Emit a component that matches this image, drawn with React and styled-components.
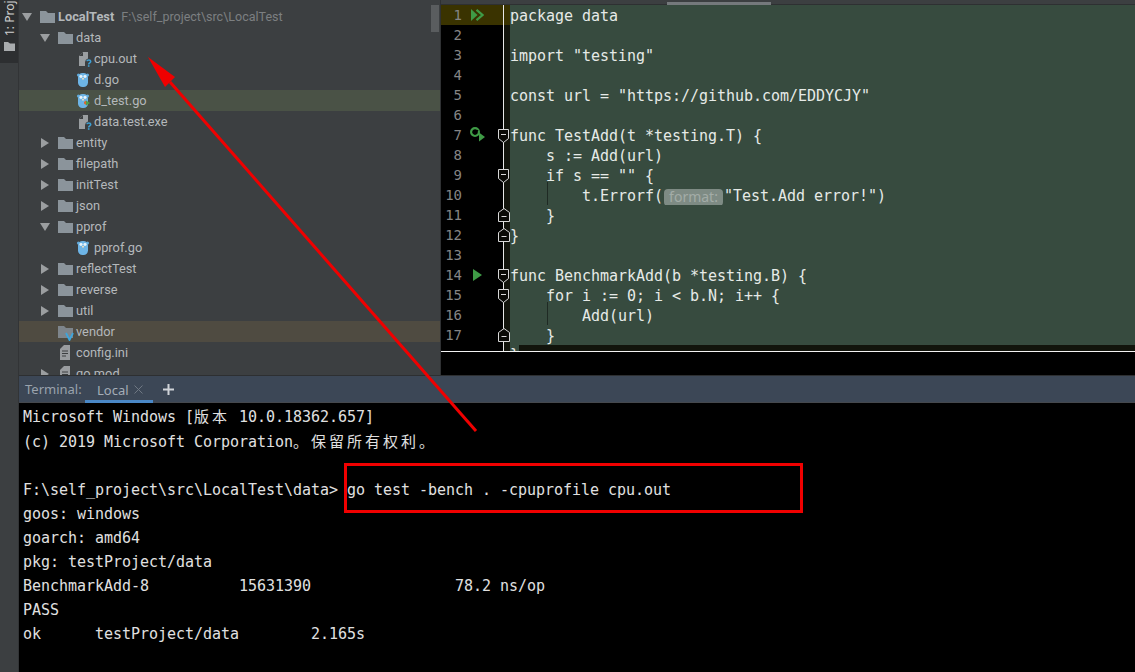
import React from "react";
import styled, { createGlobalStyle } from "styled-components";

const Global = createGlobalStyle`
  html, body { margin: 0; padding: 0; background: #000; }
  #root { width: 1135px; height: 672px; overflow: hidden; }
`;

const Page = styled.div`
  position: relative;
  width: 1135px;
  height: 672px;
  display: flex;
  overflow: hidden;
  background: #000;
`;
const Rail = styled.aside`
  width: 19px;
  flex: none;
  background: #3c3f41;
  border-right: 1px solid #323436;
  box-sizing: border-box;
`;
const RailTab = styled.div`
  height: 63px;
  background: #2d2f31;
  display: flex;
  flex-direction: column;
  align-items: center;
  overflow: hidden;
`;
const RailLabel = styled.div`
  writing-mode: vertical-rl;
  transform: rotate(180deg);
  height: 36px;
  flex: none;
  display: flex;
  justify-content: flex-start;
  overflow: hidden;
  font: 12px "Noto Sans", sans-serif;
  color: #d0d0d0;
  line-height: 17px;
  white-space: nowrap;
`;
const RailFolder = styled.svg`
  margin-top: 6px;
  flex: none;
`;
const Main = styled.div`
  flex: 1;
  min-width: 0;
  display: flex;
  flex-direction: column;
`;
const Top = styled.div`
  height: 375px;
  flex: none;
  display: flex;
  overflow: hidden;
`;
const Tree = styled.nav`
  width: 422px;
  flex: none;
  box-sizing: border-box;
  padding-top: 6px;
  background: #3c3f41;
  border-right: 1px solid #2f3133;
  overflow: hidden;
`;
const Row = styled.div`
  height: 21px;
  display: flex;
  align-items: center;
  padding-left: ${p => 3 + p.$depth * 18}px;
  background: ${p => p.$bg || "transparent"};
  font: 12.8px "Roboto", sans-serif;
  color: #b4b8bb;
  white-space: nowrap;
`;
const ArrowBox = styled.span`
  width: 18px;
  height: 21px;
  flex: none;
  display: flex;
  align-items: center;
`;
const IconBox = styled.span`
  width: 18px;
  height: 21px;
  flex: none;
  display: flex;
  align-items: center;
`;
const RowName = styled.span`
  font-weight: ${p => (p.$bold ? 700 : 400)};
`;
const RowPath = styled.span`
  margin-left: 7px;
  font-size: 12.5px;
  color: #7c7f81;
`;

const Editor = styled.section`
  flex: 1;
  min-width: 0;
  display: flex;
  flex-direction: column;
  background: #000;
`;
const EditorStrip = styled.div`
  height: 5px;
  flex: none;
  background: #3c3f41;
  border-bottom: 1px solid #2e3032;
  box-sizing: border-box;
  padding: 2px 0 0 226px;
`;
const StripThumb = styled.div`
  width: 104px;
  height: 3px;
  background: #75797c;
`;
const Lines = styled.div`
  height: 346px;
  flex: none;
  overflow: hidden;
  border-bottom: 1px solid #f2f2f2;
`;
const CodeRow = styled.div`
  height: 20px;
  display: flex;
`;
const Gutter = styled.div`
  width: 69px;
  flex: none;
  display: flex;
  position: relative;
  background: ${p => (p.$current ? "#3a3300" : "#000")};
`;
const LineNo = styled.span`
  width: 21px;
  text-align: right;
  flex: none;
  font: 14px/20px "DejaVu Sans Mono", monospace;
  color: #858585;
`;
const RunSlot = styled.span`
  width: 24px;
  margin-left: 8px;
  flex: none;
  display: flex;
  align-items: center;
`;
const FoldColumn = styled.span`
  position: absolute;
  left: 55px;
  top: 0;
  width: 14px;
  height: 20px;
  display: block;
`;
const FoldStrip = styled.i`
  position: absolute;
  left: 8px;
  right: 0;
  top: 0;
  bottom: 0;
  background: #12140c;
`;
const FoldLine = styled.i`
  position: absolute;
  left: 7px;
  top: 0;
  bottom: 0;
  width: 1px;
  background: #e8e8e8;
`;
const FoldIcon = styled.svg`
  position: absolute;
  left: 2px;
  top: ${p => (p.$end ? 3 : 4)}px;
`;
const CodeText = styled.pre`
  margin: 0;
  flex: 1;
  position: relative;
  box-sizing: border-box;
  padding-top: 1px;
  background: #374b3f;
  font: 15px/20px "DejaVu Sans Mono", monospace;
  letter-spacing: -0.03px;
  color: #e6eae7;
  white-space: pre;
`;
const Guide = styled.i`
  position: absolute;
  left: 37px;
  top: -3px;
  bottom: 0;
  width: 1px;
  background: #1f2a24;
`;
const Hint = styled.span`
  display: inline-block;
  width: 59px;
  height: 17px;
  margin: 0 1px;
  border-radius: 4px;
  background: #7e8b84;
  color: #a3aca7;
  font: 14px/16px "Noto Sans", sans-serif;
  letter-spacing: 0;
  text-align: center;
  vertical-align: -1px;
`;
const LastRow = styled.div`
  height: 6px;
  display: flex;
  overflow: hidden;
`;
const LastCode = styled.div`
  flex: 1;
  background: #12140c;
`;
const LastCell = styled.pre`
  margin: 0;
  width: 9px;
  height: 6px;
  background: #374b3f;
  font: 15px/20px "DejaVu Sans Mono", monospace;
  color: #e6eae7;
  overflow: hidden;
`;
const EditorFoot = styled.div`
  flex: 1;
  background: #000;
`;

const TabBar = styled.div`
  height: 28px;
  flex: none;
  display: flex;
  align-items: stretch;
  box-sizing: border-box;
  background: #3c4756;
  border-top: 1px solid #2d2f31;
  box-shadow: inset 0 -1px #45484d;
  font: 13px "Noto Sans", sans-serif;
`;
const TabLabel = styled.span`
  width: 66px;
  flex: none;
  box-sizing: border-box;
  padding-left: 6px;
  line-height: 27px;
  color: #9aa3ad;
`;
const Tab = styled.div`
  width: 68px;
  flex: none;
  box-sizing: border-box;
  padding-left: 12px;
  display: flex;
  align-items: center;
  gap: 5px;
  height: 27px;
  border-bottom: 3px solid #4a88c7;
  color: #a4adb7;
  padding-top: 3px;
`;
const PlusBox = styled.span`
  margin-left: 10px;
  display: flex;
  align-items: center;
`;
const Terminal = styled.pre`
  flex: 1;
  margin: 0;
  padding: 1px 0 0 4px;
  background: #000;
  font: 15px/24px "DejaVu Sans Mono", "Liberation Mono", monospace;
  letter-spacing: -0.03px;
  color: #e0e0e0;
  white-space: pre;
`;
const Cjk = styled.span`
  font-family: "Noto Sans CJK SC", sans-serif;
  letter-spacing: 3px;
`;

const Overlay = styled.svg`
  position: absolute;
  inset: 0;
  pointer-events: none;
`;
const CommandBox = styled.div`
  position: absolute;
  left: 344px;
  top: 463px;
  width: 459px;
  height: 50px;
  box-sizing: border-box;
  border: 3px solid #f00000;
`;
const TreeThumb = styled.div`
  position: absolute;
  left: 431px;
  top: 5px;
  width: 8px;
  height: 27px;
  background: #5a5d5f;
`;
const VendorWrap = styled.span`
  position: relative;
  display: flex;
`;
const VendorMark = styled.svg`
  position: absolute;
  left: 7px;
  top: 6px;
`;

const Arrow = ({ open }) => (
  <svg width="10" height="10" viewBox="0 0 10 10">
    <path d={open ? "M0 1h10L5 9z" : "M1 0l8 5-8 5z"} fill="#9b9ea0" />
  </svg>
);
const Folder = ({ fill = "#8b949b" }) => (
  <svg width="15" height="12" viewBox="0 0 15 12">
    <path d="M0 0h6l2 2h7v10H0z" fill={fill} />
  </svg>
);
const Gopher = ({ test }) => (
  <svg width="14" height="16" viewBox="0 0 14 16">
    <circle cx="2.5" cy="3" r="1.6" fill="#5fa8d8" />
    <circle cx="11.5" cy="3" r="1.6" fill="#5fa8d8" />
    <rect x="2" y="1" width="10" height="14" rx="4.5" fill="#6db4e6" />
    <ellipse cx="5" cy="4.5" rx="1.6" ry="1.4" fill="#e8f4fb" />
    <ellipse cx="9" cy="4.5" rx="1.6" ry="1.4" fill="#e8f4fb" />
    <rect x="6" y="6" width="2" height="1.5" fill="#e8dcc0" />
    {test && <path d="M8 9l2-1.5V12L8 10.5z" fill="#d8692f" />}
    {test && <path d="M10 7.5l4 2.5-4 2.5z" fill="#4f9e4a" />}
  </svg>
);
const UnknownFile = () => (
  <svg width="17" height="16" viewBox="-2 0 17 16">
    <path d="M1 5l4-4h5v6.5A4 4 0 0 0 7 11v4H1z" fill="#9a9ea1" />
    <path d="M5 1v4H1z" fill="#3c3f41" />
    <path d="M9 10.2c.2-1.6 3.6-1.8 3.7.2.1 1.6-2 1.5-2 3" fill="none" stroke="#3d9fd3" strokeWidth="1.6" />
    <rect x="9.9" y="14.2" width="1.6" height="1.6" fill="#3d9fd3" />
  </svg>
);
const TextFile = () => (
  <svg width="12" height="15" viewBox="0 0 12 15">
    <path d="M2 4l4-4h6v15H2z" fill="#999c9f" />
    <path d="M4 6h6M4 8.5h6M4 11h4" stroke="#3c3f41" strokeWidth="1" />
  </svg>
);
const VendorFolder = () => (
  <VendorWrap>
    <Folder fill="#7e858b" />
    <VendorMark width="9" height="9" viewBox="0 0 9 9">
      <path d="M1 1l3.5 7L8 1" fill="none" stroke="#3da5dc" strokeWidth="1.8" />
    </VendorMark>
  </VendorWrap>
);
const RunDouble = () => (
  <svg width="14" height="12" viewBox="0 0 14 12">
    <path d="M1 0l6.5 6L1 12z" fill="#3f9b46" />
    <path d="M6.5 .8L12.5 6l-6 5.2" fill="none" stroke="#3f9b46" strokeWidth="2.2" />
  </svg>
);
const RunSingle = () => (
  <svg width="12" height="12" viewBox="0 0 12 12">
    <path d="M3 0l9 6-9 6z" fill="#3f9b46" />
  </svg>
);
const RunRetest = () => (
  <svg width="16" height="15" viewBox="0 0 16 15" style={{ marginTop: -2 }}>
    <circle cx="5" cy="5" r="3.9" fill="none" stroke="#3f9b46" strokeWidth="2.2" />
    <path d="M3 5l2 2 3-4" fill="none" stroke="#000" strokeWidth="1.2" />
    <path d="M9 5.5l6 4.5-6 4.5z" fill="#3f9b46" />
  </svg>
);
const Fold = ({ end }) => (
  <FoldIcon $end={end} width="12" height="14" viewBox="0 0 12 14">
    <path
      d={end ? "M.5 13.5v-9L6 .5l5.5 4v9z" : "M.5 .5h10v9L5.5 13.5.5 9.5z"}
      fill="#0a0a06"
      stroke="#d8d8d8"
    />
    <path d={end ? "M3.5 8.5h5" : "M3 5.5h5"} stroke="#d8d8d8" />
  </FoldIcon>
);
const Close = () => (
  <svg width="9" height="9" viewBox="0 0 9 9">
    <path d="M.5 .5l8 8M8.5 .5l-8 8" stroke="#6f7883" />
  </svg>
);
const Plus = () => (
  <svg width="11" height="11" viewBox="0 0 11 11">
    <path d="M0 5.5h11M5.5 0v11" stroke="#cfd3d8" strokeWidth="2" />
  </svg>
);

const rows = [
  { d: 0, a: "open", i: "folder", t: "LocalTest", bold: true, path: "F:\\self_project\\src\\LocalTest" },
  { d: 1, a: "open", i: "folder", t: "data" },
  { d: 2, i: "unknown", t: "cpu.out" },
  { d: 2, i: "go", t: "d.go" },
  { d: 2, i: "test", t: "d_test.go", bg: "#4a5246" },
  { d: 2, i: "unknown", t: "data.test.exe" },
  { d: 1, a: "closed", i: "folder", t: "entity" },
  { d: 1, a: "closed", i: "folder", t: "filepath" },
  { d: 1, a: "closed", i: "folder", t: "initTest" },
  { d: 1, a: "closed", i: "folder", t: "json" },
  { d: 1, a: "open", i: "folder", t: "pprof" },
  { d: 2, i: "go", t: "pprof.go" },
  { d: 1, a: "closed", i: "folder", t: "reflectTest" },
  { d: 1, a: "closed", i: "folder", t: "reverse" },
  { d: 1, a: "closed", i: "folder", t: "util" },
  { d: 1, i: "vendor", t: "vendor", bg: "#4f4b41" },
  { d: 1, i: "text", t: "config.ini" },
  { d: 1, a: "closed", i: "text", t: "go.mod" },
];
const icons = {
  folder: <Folder />,
  unknown: <UnknownFile />,
  go: <Gopher />,
  test: <Gopher test />,
  vendor: <VendorFolder />,
  text: <TextFile />,
};

const code = [
  { t: "package data", run: <RunDouble />, current: true },
  { t: "" },
  { t: 'import "testing"' },
  { t: "" },
  { t: 'const url = "https://github.com/EDDYCJY"' },
  { t: "" },
  { t: "func TestAdd(t *testing.T) {", run: <RunRetest />, fold: "start" },
  { t: "    s := Add(url)" },
  { t: '    if s == "" {', fold: "start" },
  { t: "        t.Errorf(", hint: "format:", rest: '"Test.Add error!")', guide: true },
  { t: "    }", fold: "end" },
  { t: "}", fold: "end" },
  { t: "" },
  { t: "func BenchmarkAdd(b *testing.B) {", run: <RunSingle />, fold: "start" },
  { t: "    for i := 0; i < b.N; i++ {", fold: "start" },
  { t: "        Add(url)", guide: true },
  { t: "    }", fold: "end" },
];

export default function App() {
  return (
    <Page>
      <Global />
      <Rail>
        <RailTab>
          <RailLabel>1: Project</RailLabel>
          <RailFolder width="11" height="9" viewBox="0 0 11 9">
            <path d="M0 0h4l2 1.5h5V9H0z" fill="#a9acae" />
          </RailFolder>
        </RailTab>
      </Rail>
      <Main>
        <Top>
          <Tree>
            {rows.map(r => (
              <Row key={r.t} $depth={r.d} $bg={r.bg}>
                <ArrowBox>{r.a && <Arrow open={r.a === "open"} />}</ArrowBox>
                <IconBox>{icons[r.i]}</IconBox>
                <RowName $bold={r.bold}>{r.t}</RowName>
                {r.path && <RowPath>{r.path}</RowPath>}
              </Row>
            ))}
          </Tree>
          <Editor>
            <EditorStrip>
              <StripThumb />
            </EditorStrip>
            <Lines>
              {code.map((c, i) => (
                <CodeRow key={i}>
                  <Gutter $current={c.current}>
                    <LineNo>{i + 1}</LineNo>
                    <RunSlot>{c.run}</RunSlot>
                    <FoldColumn>
                      {!c.current && <FoldStrip />}
                      <FoldLine />
                      {c.fold && <Fold end={c.fold === "end"} />}
                    </FoldColumn>
                  </Gutter>
                  <CodeText>
                    {c.guide && <Guide />}
                    {c.t}
                    {c.hint && <Hint>{c.hint}</Hint>}
                    {c.rest}
                  </CodeText>
                </CodeRow>
              ))}
              <LastRow>
                <Gutter>
                  <FoldColumn>
                    <FoldStrip />
                    <FoldLine />
                  </FoldColumn>
                </Gutter>
                <LastCell>{"}"}</LastCell>
                <LastCode />
              </LastRow>
            </Lines>
            <EditorFoot />
          </Editor>
        </Top>
        <TabBar>
          <TabLabel>Terminal:</TabLabel>
          <Tab>
            Local <Close />
          </Tab>
          <PlusBox>
            <Plus />
          </PlusBox>
        </TabBar>
        <Terminal>
          {"Microsoft Windows ["}
          <Cjk>版本</Cjk>
          {" 10.0.18362.657]\n(c) 2019 Microsoft Corporation"}
          <Cjk>。保留所有权利。</Cjk>
          {"\n\nF:\\self_project\\src\\LocalTest\\data> go test -bench . -cpuprofile cpu.out\ngoos: windows\ngoarch: amd64\npkg: testProject/data\nBenchmarkAdd-8          15631390                78.2 ns/op\nPASS\nok      testProject/data        2.165s"}
        </Terminal>
      </Main>
      <TreeThumb />
      <CommandBox />
      <Overlay width="1135" height="672" viewBox="0 0 1135 672">
        <path d="M476 431L170 82" stroke="#f00000" strokeWidth="3" />
        <path d="M148 57L175 77L165 87z" fill="#f00000" />
      </Overlay>
    </Page>
  );
}
